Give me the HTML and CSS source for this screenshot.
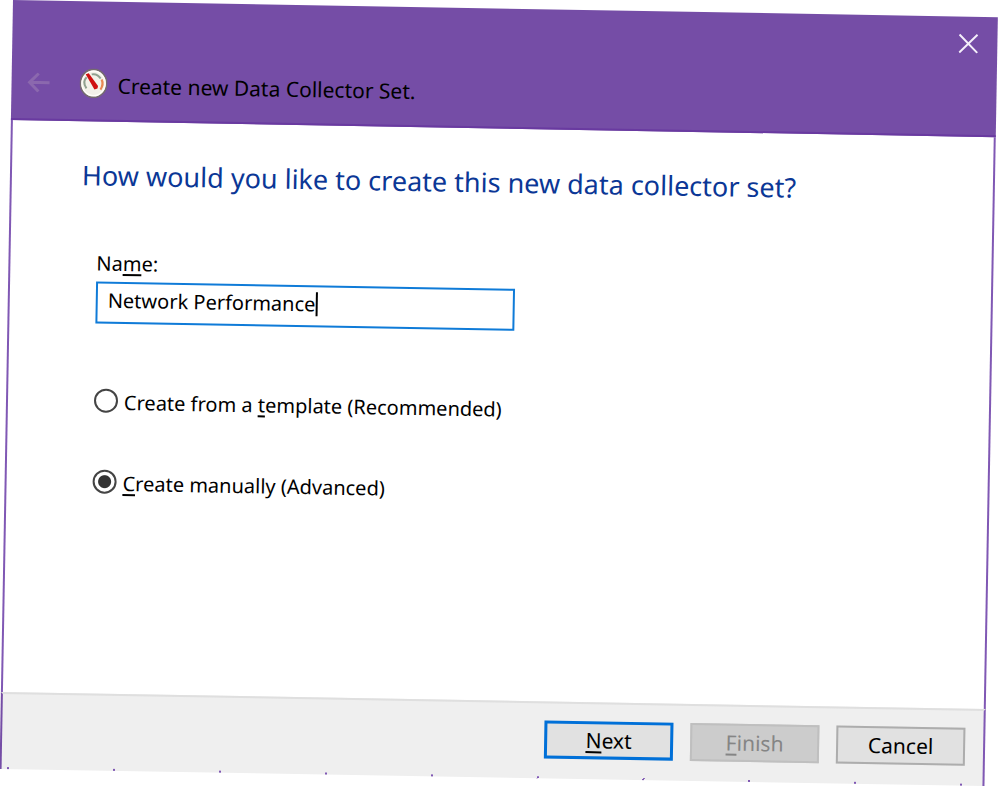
FILE: index.html
```html
<!DOCTYPE html>
<html lang="en">
<head>
<meta charset="utf-8">
<title>Create new Data Collector Set</title>
<link rel="stylesheet" href="styles.css">
</head>
<body>
<main class="wizard">
  <header class="titlebar">
    <div class="window-controls">
      <button class="icon-button" type="button" aria-label="Close">
        <svg width="20" height="20" viewBox="0 0 20 20" fill="none" stroke="#f4effa" stroke-width="2"><path d="M1 1 19 19M19 1 1 19"/></svg>
      </button>
    </div>
    <div class="title-row">
      <button class="icon-button" type="button" aria-label="Back" disabled>
        <svg width="24" height="20" viewBox="0 0 24 20" fill="none" stroke="#8b68ae" stroke-width="3"><path d="M23 10H3M12 1 3 10l9 9"/></svg>
      </button>
      <svg class="gauge" width="28" height="30" viewBox="0 0 28 30" aria-hidden="true">
        <ellipse cx="14" cy="15" rx="13.2" ry="14" fill="#f3f1e9" stroke="#756b70" stroke-width="1.6"/>
        <ellipse cx="14" cy="15" rx="11.6" ry="12.3" fill="none" stroke="#fffef8" stroke-width="1.2"/>
        <path d="M7 20C4 16 4 12 7 9" fill="none" stroke="#91a190" stroke-width="2"/>
        <path d="M12 6c4-1 7 1 9 4" fill="none" stroke="#91a190" stroke-width="2"/>
        <path d="M22 11c2 4 1 7-1 10" fill="none" stroke="#e88953" stroke-width="2.2"/>
        <path d="M6 6 9 5 18.500 17.500 18 20 15 21Z" fill="#cf1010"/>
      </svg>
      <span class="title">Create new Data Collector Set.</span>
    </div>
  </header>
  <form class="content">
    <h1 class="heading">How would you like to create this new data collector set?</h1>
    <label class="label" for="name">Na<u>m</u>e:</label>
    <div class="field">
      <input class="field-input" id="name" type="text" value="Network Performance">
      <span class="caret"></span>
    </div>
    <div class="options">
      <label class="option"><input class="radio" type="radio" name="mode"><span class="option-text">Create from a <u>t</u>emplate (Recommended)</span></label>
      <label class="option"><input class="radio" type="radio" name="mode" checked><span class="option-text"><u>C</u>reate manually (Advanced)</span></label>
    </div>
  </form>
  <footer class="footer">
    <button class="button button-primary" type="button"><span><u>N</u>ext</span></button>
    <button class="button" type="button" disabled><span><u>F</u>inish</span></button>
    <button class="button" type="button">Cancel</button>
  </footer>
</main>
</body>
</html>
```
FILE: styles.css
```css
* { box-sizing: border-box; }

body {
  min-height: 100vh;
  margin: 0;
  overflow: hidden;
  background: #fff;
  color: #000;
  font: 21px/28px "Noto Sans", "Open Sans", sans-serif;
}

button, input { font: inherit; color: inherit; }

u { text-underline-offset: 3px; text-decoration-thickness: 2px; }

.wizard {
  display: flex;
  flex-direction: column;
  min-height: calc(100vh - 18px);
  margin: 0 2px 0 13px;
  transform: rotate(1deg);
  transform-origin: 0 0;
}

.titlebar {
  padding-bottom: 8px;
  background: #754da6;
  border-bottom: 2px solid #693aa0;
}

.window-controls {
  display: flex;
  justify-content: flex-end;
  padding: 17px 19px 17px 0;
}

.icon-button {
  display: flex;
  padding: 0;
  border: 0;
  background: none;
}

.title-row {
  display: flex;
  align-items: center;
  height: 56px;
  padding-left: 15px;
}

.gauge { margin: 0 10px 0 29px; }

.title { padding-top: 4px; }

.content {
  flex: 1;
  padding: 34px 70px;
  border: solid #8058b4;
  border-width: 0 2px;
  font-size: 20px;
}

.heading {
  margin: 0 0 54px;
  color: #0b3796;
  font-size: 27px;
  font-weight: 400;
  line-height: 40px;
}

.label {
  display: block;
  padding-left: 16px;
}

.field {
  display: flex;
  align-items: center;
  width: 419px;
  max-width: 100%;
  height: 42px;
  margin: 4px 0 0 16px;
  padding: 0 10px 4px;
  border: 2px solid #0f7bd8;
}

.field-input {
  field-sizing: content;
  padding: 0;
  border: 0;
  outline: 0;
  background: none;
}

.caret {
  width: 2px;
  height: 24px;
  background: #000;
}

.options {
  display: grid;
  gap: 49px;
  padding: 61px 0 0 16px;
}

.option {
  display: flex;
  align-items: center;
  gap: 6px;
}

.option-text { padding-top: 4px; }

.radio {
  appearance: none;
  width: 24px;
  height: 24px;
  margin: 0;
  border: 2px solid #444;
  border-radius: 50%;
  background: #fff;
}

.radio:checked { background: radial-gradient(circle, #333 6px, #fff 7px); }

.footer {
  display: flex;
  justify-content: flex-end;
  gap: 17px;
  padding: 17px 18px 20px;
  background:
    repeating-linear-gradient(90deg, transparent 0 5px, #8058b4 5px 7px, transparent 7px 106px) 0 100% / 100% 2px no-repeat,
    #efefef;
  border-top: 2px solid #dfdfdf;
  border-left: 2px solid #754da6;
  border-right: 2px solid #8058b4;
}

.button {
  width: 129px;
  height: 38px;
  padding: 0;
  border: 2px solid #adadad;
  background: #e1e1e1;
}

.button-primary { border: 3px solid #0070d8; }

.button:disabled {
  border-color: #bfbfbf;
  background: #ccc;
  color: #858585;
}
```
